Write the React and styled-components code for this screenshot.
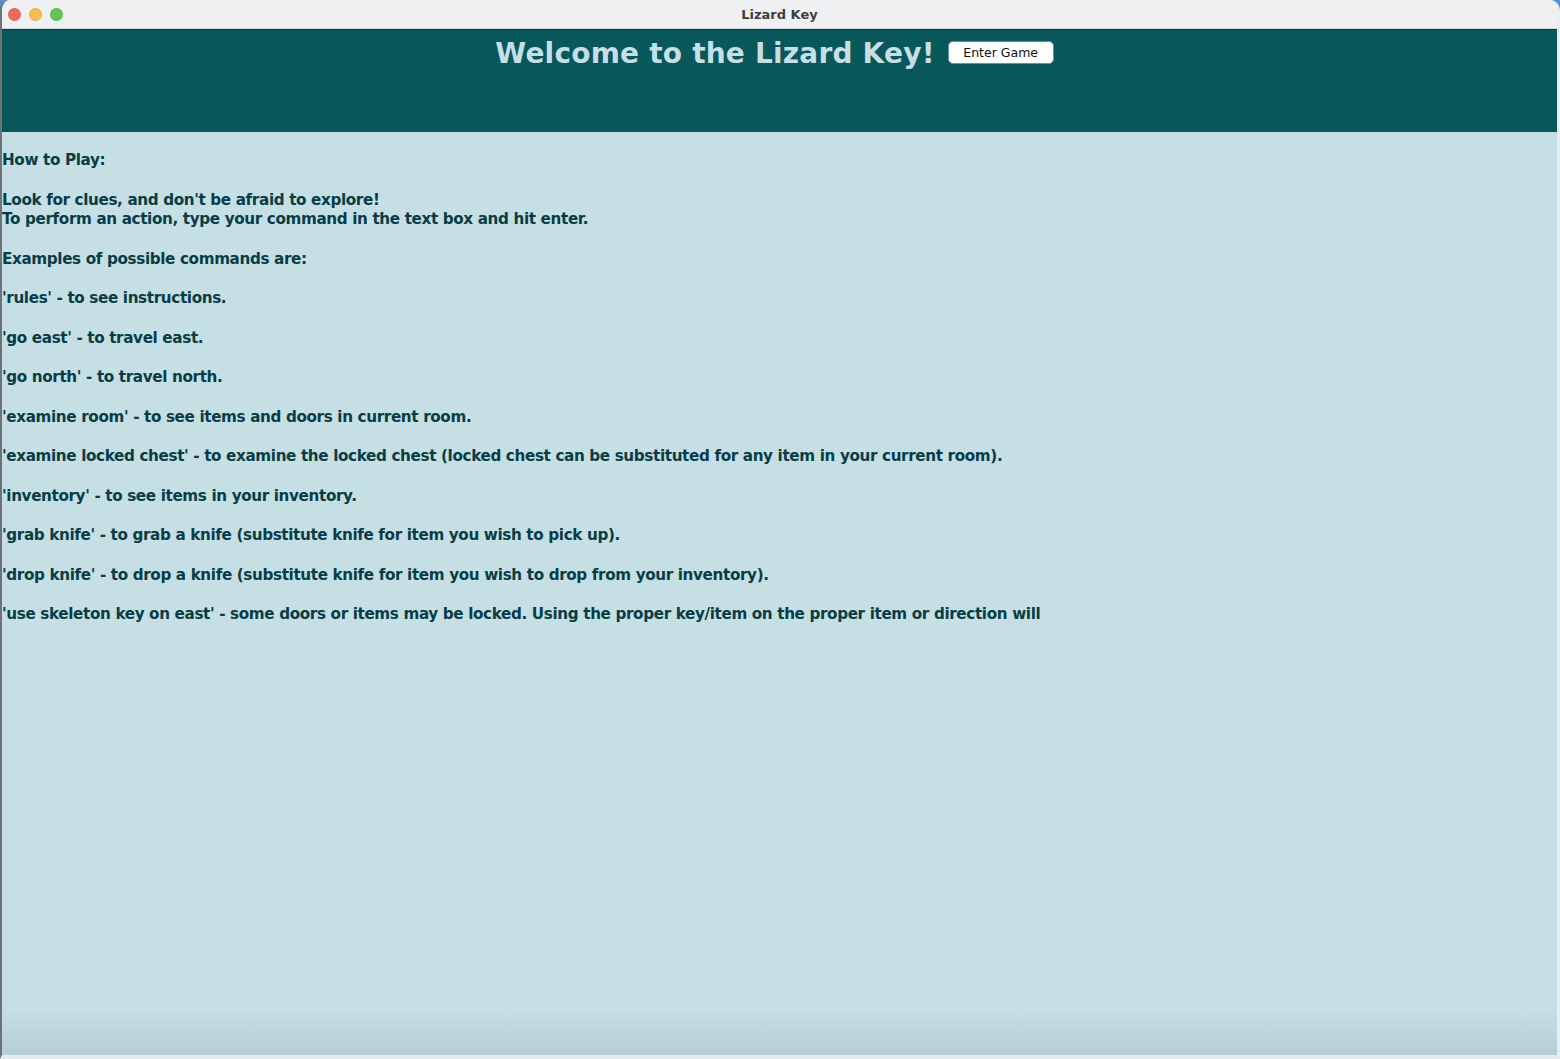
import React from "react";
import styled, { createGlobalStyle } from "styled-components";

const GlobalStyle = createGlobalStyle`
	html, body {
		margin: 0;
		padding: 0;
		background: #5b8fc9;
	}
	* {
		box-sizing: border-box;
	}
`;

const Window = styled.div`
	width: 1560px;
	height: 1059px;
	display: flex;
	flex-direction: column;
	background-color: #c5dfe5;
	border-radius: 10px 10px 0 0;
	overflow: hidden;
	border-left: 2px solid #6d7477;
	border-right: 3px solid #e9eef0;
	border-bottom: 4px solid #e4ebed;
	font-family: "DejaVu Sans", "Liberation Sans", sans-serif;
`;

const TitleBar = styled.div`
	position: relative;
	height: 29px;
	flex-shrink: 0;
	display: flex;
	align-items: center;
	justify-content: center;
	background-color: #eff0f2;
	border-bottom: 1px solid #d3d5d8;
`;

const Lights = styled.div`
	position: absolute;
	left: 6px;
	top: 8px;
	display: flex;
	gap: 8px;
`;

const Light = styled.span`
	width: 13px;
	height: 13px;
	border-radius: 50%;
	background-color: ${(p) => p.color};
	border: 1px solid rgba(0, 0, 0, 0.08);
`;

const WindowTitle = styled.span`
	font-size: 13px;
	font-weight: bold;
	color: #3e3e40;
`;

const Header = styled.header`
	height: 103px;
	flex-shrink: 0;
	display: flex;
	justify-content: center;
	align-items: flex-start;
	gap: 13px;
	padding: 8px 10px 0 0;
	background-color: #08575b;
	border-top: 1px solid #064045;
`;

const Title = styled.h1`
	margin: 0;
	font-size: 28px;
	line-height: 32px;
	font-weight: bold;
	color: #c5dfe5;
	letter-spacing: 0.2px;
`;

const EnterButton = styled.button`
	margin-top: 3px;
	width: 106px;
	height: 23px;
	padding: 0;
	background-color: #ffffff;
	border: 1px solid #5c8fc3;
	border-radius: 5px;
	font-family: "DejaVu Sans", "Liberation Sans", sans-serif;
	font-size: 12.5px;
	color: #111111;
	cursor: pointer;
`;

const Content = styled.main`
	flex: 1;
	padding: 19px 0 0 0;
	background: linear-gradient(
		to bottom,
		#c5dfe5 0%,
		#c5dfe5 95%,
		#b4ced4 100%
	);
`;

const Rules = styled.pre`
	margin: 0;
	font-family: "DejaVu Sans", "Liberation Sans", sans-serif;
	font-size: 15.2px;
	line-height: 19.75px;
	letter-spacing: -0.36px;
	font-weight: bold;
	color: #083d45;
	white-space: pre;
`;

const rulesText = `How to Play:

Look for clues, and don't be afraid to explore!
To perform an action, type your command in the text box and hit enter.

Examples of possible commands are:

'rules' - to see instructions.

'go east' - to travel east.

'go north' - to travel north.

'examine room' - to see items and doors in current room.

'examine locked chest' - to examine the locked chest (locked chest can be substituted for any item in your current room).

'inventory' - to see items in your inventory.

'grab knife' - to grab a knife (substitute knife for item you wish to pick up).

'drop knife' - to drop a knife (substitute knife for item you wish to drop from your inventory).

'use skeleton key on east' - some doors or items may be locked. Using the proper key/item on the proper item or direction will`;

export default function App() {
	return (
		<>
			<GlobalStyle />
			<Window>
				<TitleBar>
					<Lights>
						<Light color="#ee6a5f" />
						<Light color="#f5be4f" />
						<Light color="#62c554" />
					</Lights>
					<WindowTitle>Lizard Key</WindowTitle>
				</TitleBar>
				<Header>
					<Title>Welcome to the Lizard Key!</Title>
					<EnterButton>Enter Game</EnterButton>
				</Header>
				<Content>
					<Rules>{rulesText}</Rules>
				</Content>
			</Window>
		</>
	);
}
